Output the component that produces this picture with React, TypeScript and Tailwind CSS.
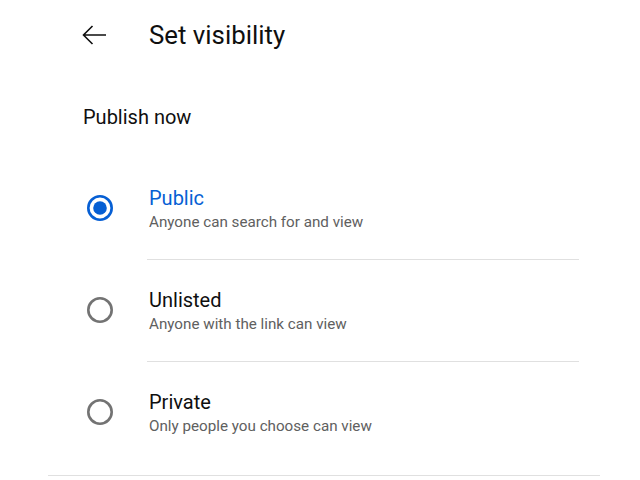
import React, { useState } from 'react';

type Option = {
  id: string;
  title: string;
  subtitle: string;
};

const options: Option[] = [
  { id: 'public', title: 'Public', subtitle: 'Anyone can search for and view' },
  { id: 'unlisted', title: 'Unlisted', subtitle: 'Anyone with the link can view' },
  { id: 'private', title: 'Private', subtitle: 'Only people you choose can view' },
];

function Radio({ checked }: { checked: boolean }) {
  return (
    <svg width="26" height="26" viewBox="0 0 26 26" className="shrink-0 block">
      <circle
        cx="13"
        cy="13"
        r="11.7"
        fill="none"
        stroke={checked ? '#065fd4' : '#737373'}
        strokeWidth="2.6"
      />
      {checked && <circle cx="13" cy="13" r="6.8" fill="#065fd4" />}
    </svg>
  );
}

export default function App() {
  const [selected, setSelected] = useState('public');

  return (
    <div className="w-[640px] h-[480px] bg-white overflow-hidden font-['Roboto',sans-serif] text-[#0f0f0f]">
      {/* header */}
      <div className="flex items-center pt-[19px] pl-[82px]">
        <svg width="24" height="20" viewBox="0 0 24 20" fill="none" stroke="#0f0f0f" strokeWidth="1.6">
          <path d="M24 10H1.5M10.5 1L1.5 10l9 9" />
        </svg>
        <h1 className="ml-[43px] text-[25.8px] leading-[32px] font-normal">Set visibility</h1>
      </div>

      <p className="mt-[54px] pl-[83px] text-[20px] leading-[24px]">Publish now</p>

      <div className="mt-[29px]">
        {options.map((opt, i) => {
          const checked = selected === opt.id;
          const last = i === options.length - 1;
          return (
            <div
              key={opt.id}
              onClick={() => setSelected(opt.id)}
              className="flex pl-[87px] cursor-pointer"
            >
              <div className="mr-[34px] pt-[37px]">
                <Radio checked={checked} />
              </div>
              <div
                className={
                  last
                    ? 'w-[432px] pt-[28px] pl-[2px]'
                    : 'w-[432px] pt-[28px] pb-[27px] pl-[2px] border-b border-[#e0e0e0]'
                }
              >
                <div className={checked ? 'text-[20px] leading-[24px] text-[#065fd4]' : 'text-[20px] leading-[24px] text-[#0f0f0f]'}>
                  {opt.title}
                </div>
                <div className="mt-[2px] text-[15.2px] leading-[20px] text-[#606060]">{opt.subtitle}</div>
              </div>
            </div>
          );
        })}
      </div>

      <div className="mt-[39px] ml-[48px] w-[552px] h-px bg-[#e0e0e0]" />
    </div>
  );
}
